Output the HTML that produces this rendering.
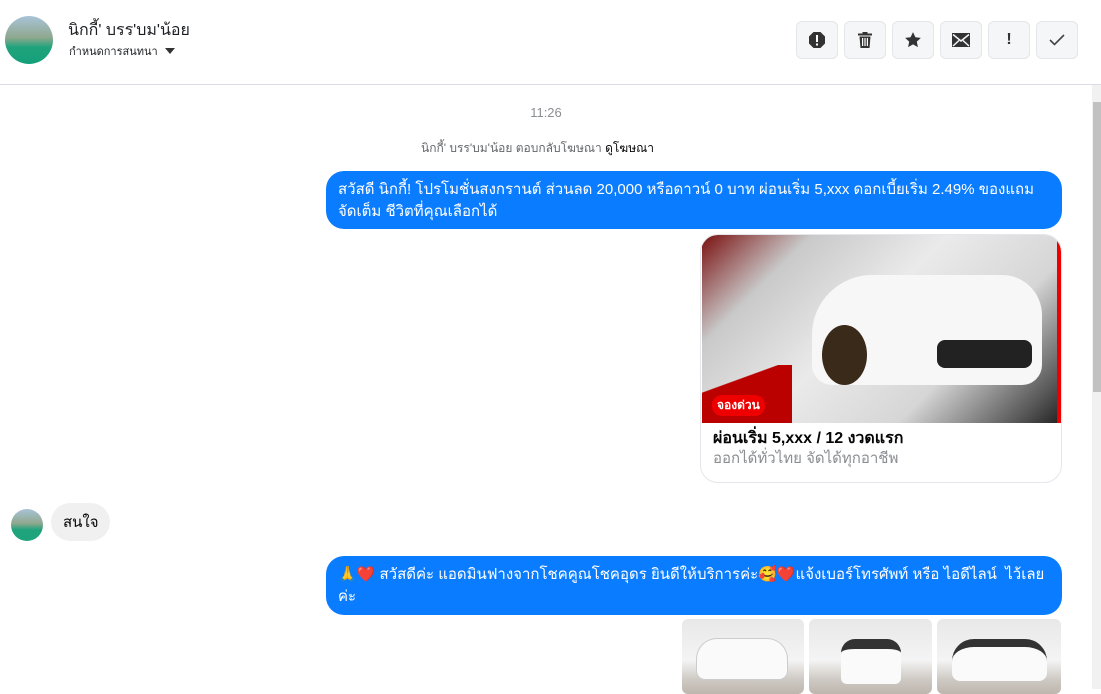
<!DOCTYPE html>
<html><head><meta charset="utf-8"><style>
*{box-sizing:border-box;margin:0;padding:0}
body{width:1101px;height:689px;overflow:hidden;background:#fff;font-family:"Liberation Sans","Noto Sans CJK SC",sans-serif;position:relative;color:#050505}
.abs{position:absolute}
.hdr{left:0;top:0;width:1101px;height:85px;border-bottom:1px solid #dadde1}
.btn{top:21px;width:42px;height:38px;border:1px solid #e4e6eb;border-radius:6px;background:#f5f6f7;display:flex;align-items:center;justify-content:center}
.blue{background:#0a7cff;color:#fff;border-radius:18px;font-size:15px;line-height:22px;padding:8px 12px 4px}
.sb{left:1092px;top:85px;width:9px;height:604px;background:#f1f1f1}
.thumb{left:1093px;top:102px;width:8px;height:290px;background:#c1c1c1}
.car{background:linear-gradient(#e8e8e8 0%,#f4f4f4 55%,#cfcac4 80%,#bdb6ae 100%);border-radius:6px;overflow:hidden}
</style></head><body>
<div class="abs hdr"></div>
<div class="abs" style="left:5px;top:16px;width:48px;height:48px;border-radius:50%;background:linear-gradient(#a9c3d8 0%,#8fa88e 45%,#1fa37c 65%,#14a07a 100%)"></div>
<div class="abs" style="left:68px;top:18px;font-size:16px;color:#1c1e21">นิกกี้' บรร'บม'น้อย</div>
<div class="abs" style="left:69px;top:42px;font-size:11px;color:#1c1e21">กำหนดการสนทนา <span style="display:inline-block;width:0;height:0;border-left:5px solid transparent;border-right:5px solid transparent;border-top:6px solid #333;margin-left:4px;vertical-align:1px"></span></div>

<div class="abs btn" style="left:796px"><svg width="18" height="18" viewBox="0 0 18 18"><polygon points="5.5,1 12.5,1 17,5.5 17,12.5 12.5,17 5.5,17 1,12.5 1,5.5" fill="#333"/><rect x="8" y="4" width="2" height="7" fill="#fff"/><rect x="8" y="12.5" width="2" height="2" fill="#fff"/></svg></div>
<div class="abs btn" style="left:844px"><svg width="16" height="18" viewBox="0 0 16 18"><rect x="1" y="2.5" width="14" height="2" fill="#333"/><rect x="5.5" y="1" width="5" height="2" fill="#333"/><path d="M2.5 5.5h11l-1 11.5h-9z" fill="#333"/><rect x="5" y="7" width="1.2" height="8" fill="#fff"/><rect x="7.4" y="7" width="1.2" height="8" fill="#fff"/><rect x="9.8" y="7" width="1.2" height="8" fill="#fff"/></svg></div>
<div class="abs btn" style="left:892px"><svg width="18" height="18" viewBox="0 0 24 24"><path d="M12 1.5l3.2 6.8 7.3.9-5.4 5 1.4 7.3L12 17.8 5.5 21.5l1.4-7.3-5.4-5 7.3-.9z" fill="#333"/></svg></div>
<div class="abs btn" style="left:940px"><svg width="18" height="14" viewBox="0 0 18 14"><rect x="0" y="0" width="18" height="14" fill="#333"/><path d="M1 1.5L9 8l8-6.5M1 13l6-5.5M17 13l-6-5.5" stroke="#f5f6f7" stroke-width="1.5" fill="none"/></svg></div>
<div class="abs btn" style="left:988px;font-weight:bold;font-size:16px;color:#333">!</div>
<div class="abs btn" style="left:1036px"><svg width="16" height="12" viewBox="0 0 16 12"><path d="M1 6l4.5 4.5L15 1" stroke="#444" stroke-width="1.6" fill="none"/></svg></div>

<div class="abs" style="left:0;width:1092px;top:105px;text-align:center;font-size:13px;color:#8a8d91">11:26</div>
<div class="abs" style="left:0;width:1075px;top:139px;text-align:center;font-size:12px;color:#65676b">นิกกี้' บรร'บม'น้อย ตอบกลับโฆษณา <span style="color:#050505">ดูโฆษณา</span></div>

<div class="abs blue" style="left:326px;top:171px;width:736px;height:58px">สวัสดี นิกกี้! โปรโมชั่นสงกรานต์ ส่วนลด 20,000 หรือดาวน์ 0 บาท ผ่อนเริ่ม 5,xxx ดอกเบี้ยเริ่ม 2.49% ของแถม จัดเต็ม ชีวิตที่คุณเลือกได้</div>

<div class="abs" style="left:700px;top:234px;width:362px;height:249px;border:1px solid #e4e6eb;border-radius:18px;overflow:hidden">
 <div style="position:absolute;left:1px;top:0;width:359px;height:188px;background:linear-gradient(135deg,#7a1010 0%,#c9c9c9 20%,#eaeaea 45%,#d6d6d6 70%,#555 92%,#222 100%)">
  <div style="position:absolute;left:110px;top:40px;width:230px;height:110px;background:#f7f7f7;border-radius:60px 40px 20px 20px"></div>
  <div style="position:absolute;left:120px;top:90px;width:45px;height:60px;background:#3a2a1a;border-radius:50%"></div>
  <div style="position:absolute;left:235px;top:105px;width:95px;height:28px;background:#222;border-radius:8px"></div>
  <div style="position:absolute;left:0;top:130px;width:90px;height:58px;background:linear-gradient(160deg,transparent 30%,#b00 31%)"></div>
  <div style="position:absolute;left:10px;top:160px;padding:1px 5px;background:#e00;border-radius:10px;color:#fff;font-size:12px;font-weight:bold">จองด่วน</div>
  <div style="position:absolute;right:0;top:0;width:4px;height:188px;background:#e00"></div>
 </div>
 <div style="position:absolute;left:12px;top:191px;font-size:16px;font-weight:bold;color:#050505">ผ่อนเริ่ม 5,xxx / 12 งวดแรก</div>
 <div style="position:absolute;left:12px;top:211px;font-size:15px;color:#8a8d91">ออกได้ทั่วไทย จัดได้ทุกอาชีพ</div>
</div>

<div class="abs" style="left:11px;top:509px;width:32px;height:32px;border-radius:50%;background:linear-gradient(#a9c3d8,#8fa88e 45%,#1fa37c 65%)"></div>
<div class="abs" style="left:51px;top:503px;width:59px;height:38px;border-radius:19px;background:#f0f0f0;font-size:15px;line-height:40px;padding-left:12px">สนใจ</div>

<div class="abs blue" style="left:326px;top:556px;width:736px;height:59px">🙏❤️ สวัสดีค่ะ แอดมินฟางจากโชคคูณโชคอุดร ยินดีให้บริการค่ะ🥰❤️แจ้งเบอร์โทรศัพท์ หรือ ไอดีไลน์ &nbsp;ไว้เลยค่ะ</div>

<div class="abs car" style="left:682px;top:619px;width:122px;height:75px"><div style="margin:20px 0 0 15px;width:90px;height:40px;background:#fafafa;border-radius:20px 20px 8px 8px;box-shadow:0 0 0 1px #ccc"></div></div>
<div class="abs car" style="left:809px;top:619px;width:123px;height:75px"><div style="margin:20px 0 0 32px;width:60px;height:45px;background:#fafafa;border-radius:14px 14px 6px 6px;border-top:10px solid #333"></div></div>
<div class="abs car" style="left:937px;top:619px;width:124px;height:75px"><div style="margin:20px 0 0 15px;width:95px;height:42px;background:#fafafa;border-radius:22px 22px 8px 8px;border-top:8px solid #333"></div></div>

<div class="abs sb"></div>
<div class="abs thumb"></div>
</body></html>
